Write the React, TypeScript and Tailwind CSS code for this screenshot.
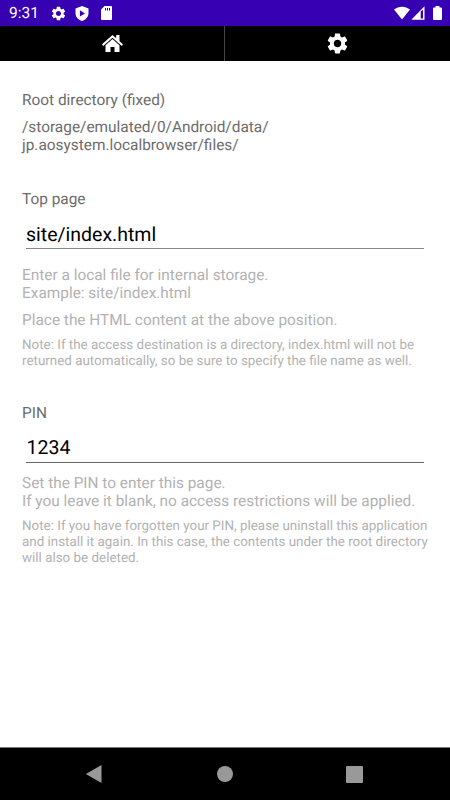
import type { ReactNode } from "react";
import { MdSettings } from "react-icons/md";

function StatusBar() {
  return (
    <div className="flex h-[26px] shrink-0 items-center bg-[#3700b3] pl-[9px] pr-[8px] text-white">
      <span className="w-[41px] pt-[1px] text-[15.5px] leading-[25px]">9:31</span>
      <MdSettings className="size-[17px]" />
      <svg className="ml-[8px] h-[15px] w-[14px]" viewBox="0 0 14 15" fill="white">
        <path
          fillRule="evenodd"
          d="M7 0 13.500 2.400V7c0 3.800-2.600 6.800-6.500 8C3.100 13.800.5 10.800.5 7V2.400ZM4.900 4.200v6.400L10 7.400Z"
        />
      </svg>
      <svg className="ml-[12px] h-[14px] w-[11px]" viewBox="0 0 11 14">
        <path d="M3.500 0H10q1 0 1 1V13q0 1-1 1H1q-1 0-1-1V3.500Z" fill="white" />
        <path d="M4.500 2v2.500M6.500 2v2.500M8.500 2v2.500" stroke="#3700b3" strokeWidth="1" />
      </svg>
      <div className="ml-auto flex items-center">
        <svg className="h-[14px] w-[16px]" viewBox="0 0 16 14">
          <path d="M8 13.500 0 3.600C4.500-.3 11.500-.3 16 3.600Z" fill="white" />
        </svg>
        <svg className="ml-[1px] h-[14px] w-[14px]" viewBox="0 0 14 14">
          <path fillRule="evenodd" d="M13.500 .3V13.700H.3ZM9.700 5.500V12.600H12V3.800Z" fill="white" />
        </svg>
        <svg className="ml-[8px] h-[14px] w-[9px]" viewBox="0 0 9 14">
          <path d="M2.500 0h4v1.500H8q1 0 1 1V13q0 1-1 1H1q-1 0-1-1V2.500q0-1 1-1h1.500Z" fill="white" />
        </svg>
      </div>
    </div>
  );
}

function HomeIcon() {
  return (
    <svg className="h-[18px] w-[21px]" viewBox="0 0 21 18" fill="white">
      <path d="M10.500 0 14.200 3.300V0H17.500V6.200L21 9.300 19.800 10.900 10.500 2.800 1.200 10.900 0 9.300Z" />
      <path d="M10.500 4.100 17.500 10.200V17H12.500V12H8.500V17H3.500V10.200Z" />
    </svg>
  );
}

function TabBar() {
  return (
    <div className="flex h-[35px] shrink-0 bg-black text-white">
      <div className="flex w-[225px] items-center justify-center border-r border-[#444]">
        <HomeIcon />
      </div>
      <div className="flex w-[225px] items-center justify-center">
        <MdSettings className="size-[25px]" />
      </div>
    </div>
  );
}

function Hint({ children }: { children: ReactNode }) {
  return <p className="whitespace-nowrap text-[#b2b2b2]">{children}</p>;
}

function Note({ children }: { children: ReactNode }) {
  return <p className="whitespace-nowrap text-[13.4px] leading-[16px] text-[#b2b2b2]">{children}</p>;
}

export default function App() {
  return (
    <div className="flex h-[800px] w-[450px] flex-col overflow-hidden bg-white font-['Roboto',sans-serif] [text-rendering:geometricPrecision]">
      <StatusBar />
      <TabBar />
      <main className="flex-1 px-[22px] pt-[30px] text-[15.4px] leading-[18px] text-[#6c6c6c]">
        <section>
          <h2>Root directory (fixed)</h2>
          <p className="mt-[9px]">
            /storage/emulated/0/Android/data/
            <br />
            jp.aosystem.localbrowser/files/
          </p>
        </section>
        <section className="mt-[36px]">
          <h2>Top page</h2>
          <div className="mx-[4px] mt-[14px] h-[27px] border-b border-[#888] pt-[1px] text-[19.5px] leading-[24px] text-black">
            site/index.html
          </div>
          <div className="mt-[17px]">
            <Hint>
              Enter a local file for internal storage.
              <br />
              Example: site/index.html
            </Hint>
          </div>
          <div className="mt-[9px]">
            <Hint>Place the HTML content at the above position.</Hint>
          </div>
          <div className="mt-[9px]">
            <Note>
              Note: If the access destination is a directory, index.html will not be
              <br />
              returned automatically, so be sure to specify the file name as well.
            </Note>
          </div>
        </section>
        <section className="mt-[34px]">
          <h2>PIN</h2>
          <div className="mx-[4px] mt-[14px] h-[27px] border-b border-[#666] pl-[0.5px] text-[19.5px] leading-[24px] text-black">
            1234
          </div>
          <div className="mt-[11px]">
            <Hint>
              Set the PIN to enter this page.
              <br />
              If you leave it blank, no access restrictions will be applied.
            </Hint>
          </div>
          <div className="mt-[9px]">
            <Note>
              Note: If you have forgotten your PIN, please uninstall this application
              <br />
              and install it again. In this case, the contents under the root directory
              <br />
              will also be deleted.
            </Note>
          </div>
        </section>
      </main>
      <nav className="flex h-[53px] shrink-0 items-center justify-between border-t border-[#777] bg-black pl-[85px] pr-[87px]">
        <svg className="h-[18px] w-[17px]" viewBox="0 0 17 18">
          <path d="M.8 9 16.500 0V18Z" fill="#999" />
        </svg>
        <div className="ml-[2px] size-[16px] rounded-full bg-[#999]" />
        <div className="size-[17px] rounded-[1px] bg-[#999]" />
      </nav>
    </div>
  );
}
